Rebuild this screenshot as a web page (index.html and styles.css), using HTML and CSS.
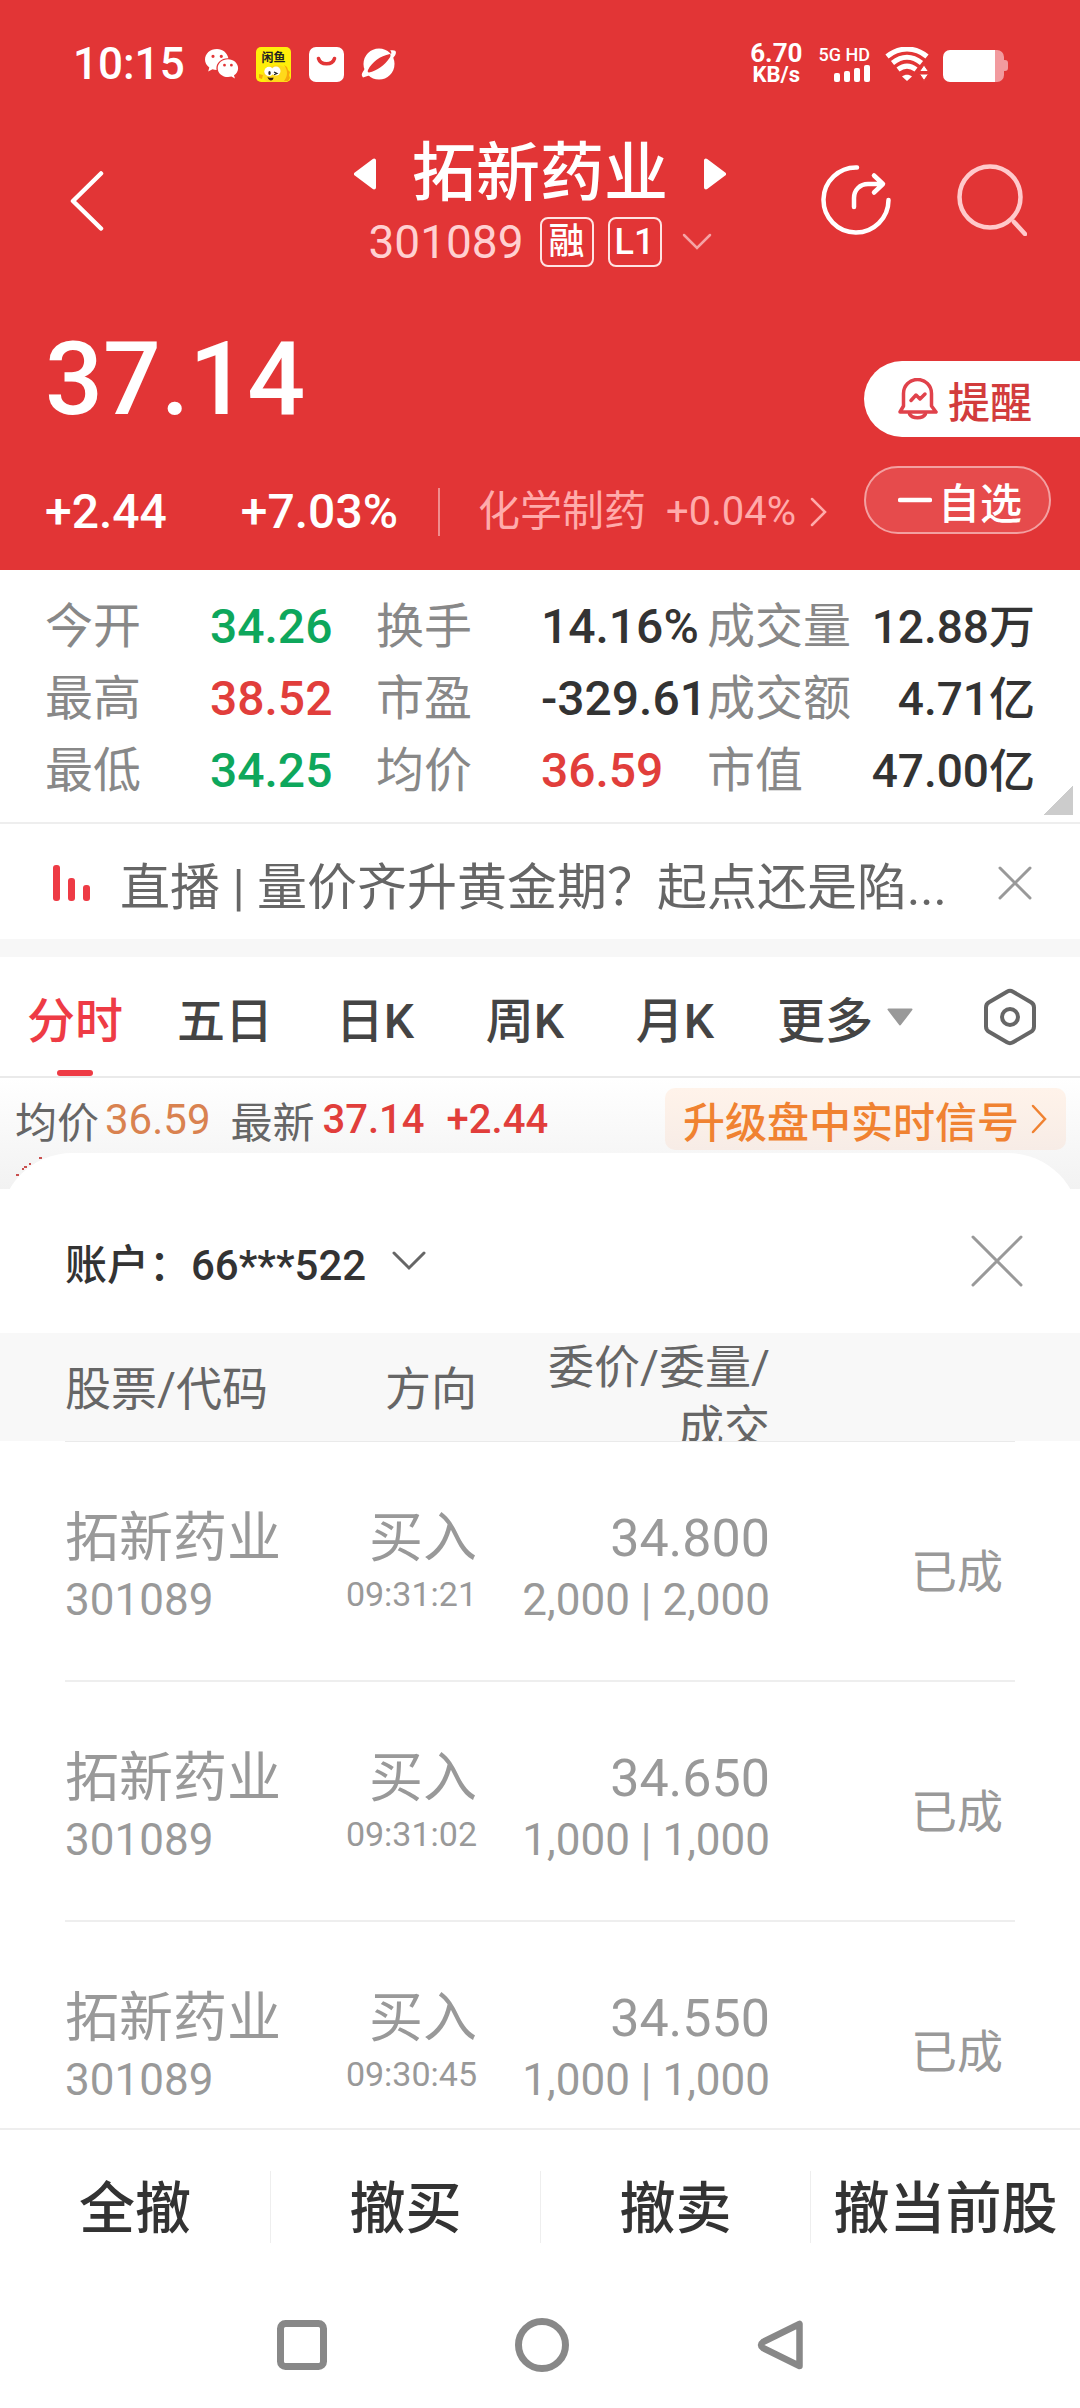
FILE: index.html
```html
<!DOCTYPE html>
<html lang="zh-CN">
<head>
<meta charset="utf-8">
<meta name="viewport" content="width=device-width, initial-scale=1">
<title>拓新药业 301089</title>
<link rel="stylesheet" href="styles.css">
</head>
<body>
<div class="app">
  <header class="hero">
    <div class="status">
      <div class="status-left">
        <span class="clock">10:15</span>
        <svg class="ic-wechat" width="34" height="30" viewBox="0 0 34 30"><path fill="#fff" fill-rule="evenodd" d="M12 0C5 0 0 4.800 0 10.500c0 3.300 1.600 6 4.300 8L3.200 22.500l4.300-2.200c1.300.400 2.600.600 4.100.600-.100-.500-.200-1.100-.200-1.600 0-5.600 5-10 11.200-10h.800C22.300 3.900 17.600 0 12 0zM8 5.700a1.600 1.600 0 1 1 0 3.200 1.600 1.600 0 0 1 0-3.200zm8.300 0a1.600 1.600 0 1 1 0 3.200 1.600 1.600 0 0 1 0-3.200z"/><path fill="#fff" fill-rule="evenodd" d="M23 10.300c-5.800 0-10.300 4-10.300 8.900s4.500 8.900 10.300 8.900c1.200 0 2.400-.200 3.500-.500l3.400 1.900-.900-3.200c2.600-1.700 4.100-4.200 4.100-7.100 0-4.900-4.500-8.900-10.100-8.900zm-3.500 4.500a1.400 1.400 0 1 1 0 2.800 1.400 1.400 0 0 1 0-2.800zm6.900 0a1.400 1.400 0 1 1 0 2.800 1.400 1.400 0 0 1 0-2.800z"/></svg>
        <svg class="ic-fish" width="35" height="35" viewBox="0 0 35 35"><rect width="35" height="35" rx="5" fill="#ffee0a"/><path d="M11 35C5 30 6 22 14 19.500c6-2 14-2 18 4 3 5 1 9-1 11.500z" fill="#ffd91a"/><path d="M28 18l3 2 1 3 2 2-1 3 1 3-2 3h-4c4-5 4-11 0-16zM3 27l4 1-1 4-3-1z" fill="#f7a80a"/><circle cx="13" cy="24.500" r="4.700" fill="#fff"/><circle cx="20" cy="24" r="4.500" fill="#fff"/><ellipse cx="13.500" cy="26" rx="1.200" ry="1.900" fill="#222"/><path d="M18 25l3 1.500-3 1.200" fill="none" stroke="#222" stroke-width="1.200"/><path d="M11.500 30c2 1 4 1 6 .500 0 4-5 4-6-.500z" fill="#3a1d0c"/><text class="fish-name" x="17.500" y="15">闲鱼</text></svg>
        <svg class="ic-bag" width="35" height="35" viewBox="0 0 35 35"><rect width="35" height="35" rx="7" fill="#fff"/><path d="M9.500 11.500c2 7 14 7 16 0" fill="none" stroke="#e23536" stroke-width="3.600" stroke-linecap="round"/></svg>
        <svg class="ic-planet" width="35" height="32" viewBox="0 0 35 32"><circle cx="18" cy="16" r="15.500" fill="#fff"/><path d="M29 2.500c6-1 7 1 5 5l-4 5c-6 7-13 12-22 15l-6 2c-3-3 0-6 3-10-.500 3 0 5 2 5 9-2 19-9 23-18 .500-2 .500-3-1-4z" fill="#fff"/><path d="M7 22C11 14 19 8 29 6c1 1 .500 2.500-.500 4C24 17 16 23 8 24.500c-1.500 0-1.500-1-1-2.500z" fill="#e23536"/></svg>
      </div>
      <div class="status-right">
        <div class="speed"><span class="speed-num">6.70</span><span class="speed-unit">KB/s</span></div>
        <div class="signal"><span>5G HD</span>
          <svg width="36" height="17" viewBox="0 0 36 17" fill="#fff"><rect y="8" width="6" height="9" rx="2"/><rect x="10" y="6" width="6" height="11" rx="2"/><rect x="20" y="3" width="6" height="14" rx="2"/><rect x="30" width="6" height="17" rx="2"/></svg>
        </div>
        <svg class="ic-wifi" width="44" height="34" viewBox="0 0 44 34"><g fill="none" stroke="#fff" stroke-width="5"><path d="M2 9.500C14-.500 30-.500 42 9.500"/><path d="M7.500 16C17 8.500 27 8.500 36.500 16"/><path d="M13 22.500c6-4.500 12-4.500 18 0"/></g><path d="M17 29.500c3-2.500 7-2.500 10 0L22 34z" fill="#fff"/><path d="M34.500 24.500L39 18l4.500 6.500zM34.500 27h9L39 33.500z" fill="#fff" stroke="#e23536" stroke-width="1"/></svg>
        <svg class="ic-batt" width="65" height="32" viewBox="0 0 65 32"><path d="M51 0h3a7 7 0 0 1 7 7v3h1a3 3 0 0 1 3 3v5a3 3 0 0 1-3 3h-1v4a7 7 0 0 1-7 7h-3z" fill="#f29a9e"/><path d="M7 0h45v32H7a7 7 0 0 1-7-7V7a7 7 0 0 1 7-7z" fill="#fff"/></svg>
      </div>
    </div>

    <div class="titlebar">
      <button class="icon-btn back" type="button" aria-label="返回"><svg width="34" height="60" viewBox="0 0 34 60"><path d="M31 2.500L3 30l28 27.500" fill="none" stroke="#fff" stroke-width="4.500" stroke-linecap="round" stroke-linejoin="round"/></svg></button>
      <div class="title">
        <div class="title-main">
          <button class="icon-btn" type="button" aria-label="上一只"><svg width="22" height="32" viewBox="0 0 22 32"><path d="M20 2.500v27L2 16z" fill="#fff" stroke="#fff" stroke-width="4" stroke-linejoin="round"/></svg></button>
          <h1>拓新药业</h1>
          <button class="icon-btn" type="button" aria-label="下一只"><svg width="22" height="32" viewBox="0 0 22 32"><path d="M2 2.500v27L20 16z" fill="#fff" stroke="#fff" stroke-width="4" stroke-linejoin="round"/></svg></button>
        </div>
        <div class="title-sub">
          <span class="code">301089</span>
          <span class="tag">融</span><span class="tag">L1</span>
          <svg class="sub-arrow" width="30" height="18" viewBox="0 0 30 18"><path d="M2 2l13 13L28 2" fill="none" stroke="#f5a3a5" stroke-width="2.500" stroke-linecap="round"/></svg>
        </div>
      </div>
      <div class="title-actions">
        <button class="icon-btn" type="button" aria-label="分享"><svg width="70" height="72" viewBox="0 0 70 72"><g fill="none" stroke="#fff" stroke-width="4.500" stroke-linecap="round" stroke-linejoin="round"><path d="M36 3.500A32.500 32.500 0 1 0 67.500 36"/><path d="M33 43V34c0-8 6-14 14-14h14M53 11.500L62 20l-9 8.500"/></g></svg></button>
        <button class="icon-btn" type="button" aria-label="搜索"><svg width="70" height="72" viewBox="0 0 70 72"><g fill="none" stroke="#ffc9cb" stroke-width="4.500" stroke-linecap="round"><ellipse cx="33" cy="33" rx="30.500" ry="30.500"/><path d="M57 58l11 12"/></g></svg></button>
      </div>
    </div>

    <div class="quote">
      <div class="quote-main">
        <div class="price">37.14</div>
        <div class="change">
          <span>+2.44</span>
          <span class="pct">+7.03%</span>
          <a class="sector" href="#">
            <span>化学制药</span><span class="sector-pct">+0.04%</span>
            <svg width="17" height="30" viewBox="0 0 17 30"><path d="M2 2l13 13L2 28" fill="none" stroke="#ffabab" stroke-width="2.500" stroke-linecap="round"/></svg>
          </a>
        </div>
      </div>
      <div class="quote-actions">
        <button class="remind" type="button"><svg width="40" height="42" viewBox="0 0 40 42"><g fill="none" stroke="#e0424b" stroke-width="3.500" stroke-linejoin="round" stroke-linecap="round"><path d="M5.500 28V15.500a14 14 0 0 1 28 0V28l4.500 6H2z"/><path d="M11.500 36c3 5 13 5 16 0"/><path d="M13 22.500l5-5.500 4 4 5-5"/></g></svg>提醒</button>
        <button class="watch" type="button"><svg width="34" height="6" viewBox="0 0 34 6"><path d="M2 3h30" stroke="#fff" stroke-width="4.500" stroke-linecap="round"/></svg>自选</button>
      </div>
    </div>
  </header>

  <dl class="stats">
    <dt>今开</dt><dd class="down">34.26</dd><dt>换手</dt><dd>14.16%</dd><dt>成交量</dt><dd class="end">12.88万</dd>
    <dt>最高</dt><dd class="up">38.52</dd><dt>市盈</dt><dd>-329.61</dd><dt>成交额</dt><dd class="end">4.71亿</dd>
    <dt>最低</dt><dd class="down">34.25</dd><dt>均价</dt><dd class="up">36.59</dd><dt>市值</dt><dd class="end">47.00亿</dd>
  </dl>

  <div class="news">
    <svg width="38" height="36" viewBox="0 0 38 36" fill="#ee3b45"><rect width="7" height="36" rx="3"/><rect x="15" y="13" width="7" height="23" rx="3"/><rect x="30" y="20" width="7" height="16" rx="3"/></svg>
    <a href="#">直播 | 量价齐升黄金期？起点还是陷...</a>
    <button class="icon-btn" type="button" aria-label="关闭"><svg width="34" height="34" viewBox="0 0 34 34"><path d="M2 2l30 30M32 2L2 32" stroke="#999" stroke-width="3" stroke-linecap="round"/></svg></button>
  </div>

  <nav class="tabs">
    <button class="tab active" type="button">分时</button>
    <button class="tab" type="button">五日</button>
    <button class="tab" type="button">日K</button>
    <button class="tab" type="button">周K</button>
    <button class="tab" type="button">月K</button>
    <button class="tab more" type="button">更多<svg width="26" height="18" viewBox="0 0 26 18"><path d="M1.500 1.500h23L13 16.500z" fill="#999" stroke="#999" stroke-width="2" stroke-linejoin="round"/></svg></button>
    <button class="icon-btn" type="button" aria-label="设置"><svg width="52" height="58" viewBox="0 0 52 58"><g fill="none" stroke="#666" stroke-width="4"><path d="M23 3.700Q26 2 29 3.700l18 10.600Q50 16 50 19.500v19q0 3.500-3 5.200L29 54.300Q26 56 23 54.300L5 43.700q-3-1.700-3-5.200v-19Q2 16 5 14.300z"/><circle cx="26" cy="29" r="8"/></g></svg></button>
  </nav>

  <div class="chart">
    <div class="legend">
      <span>均价</span><span class="avg">36.59</span><span class="latest">最新</span><span class="up">37.14</span><span class="up diff">+2.44</span>
      <a class="signal-link" href="#">升级盘中实时信号<svg width="17" height="30" viewBox="0 0 17 30"><path d="M2 2l12 13L2 28" fill="none" stroke="#f08231" stroke-width="2.500" stroke-linecap="round"/></svg></a>
    </div>
    <svg class="line" width="40" height="26" viewBox="0 0 40 26"><path d="M1 20h3M7 14h2M9 12h3M14 9h2M24 3h3" stroke="#c9504f" stroke-width="2"/></svg>
  </div>

  <main class="sheet">
    <div class="account">
      <button class="account-pick" type="button">账户：66***522<svg width="34" height="20" viewBox="0 0 34 20"><path d="M2 2l15 15L32 2" fill="none" stroke="#666" stroke-width="3" stroke-linecap="round"/></svg></button>
      <button class="icon-btn" type="button" aria-label="关闭"><svg width="52" height="52" viewBox="0 0 52 52"><path d="M2 2l48 48M50 2L2 50" stroke="#999" stroke-width="3" stroke-linecap="round"/></svg></button>
    </div>
    <table class="orders">
      <thead>
        <tr><th>股票/代码</th><th>方向</th><th class="tall">委价/委量/<br>成交</th><th></th></tr>
      </thead>
      <tbody>
        <tr>
          <td><span class="big">拓新药业</span><span class="small">301089</span></td>
          <td><span class="big">买入</span><span class="time">09:31:21</span></td>
          <td><span class="big num">34.800</span><span class="small">2,000 | 2,000</span></td>
          <td class="state">已成</td>
        </tr>
        <tr>
          <td><span class="big">拓新药业</span><span class="small">301089</span></td>
          <td><span class="big">买入</span><span class="time">09:31:02</span></td>
          <td><span class="big num">34.650</span><span class="small">1,000 | 1,000</span></td>
          <td class="state">已成</td>
        </tr>
        <tr>
          <td><span class="big">拓新药业</span><span class="small">301089</span></td>
          <td><span class="big">买入</span><span class="time">09:30:45</span></td>
          <td><span class="big num">34.550</span><span class="small">1,000 | 1,000</span></td>
          <td class="state">已成</td>
        </tr>
      </tbody>
    </table>
  </main>

  <div class="actions">
    <button type="button">全撤</button>
    <button type="button">撤买</button>
    <button type="button">撤卖</button>
    <button type="button">撤当前股</button>
  </div>

  <nav class="sysnav">
    <button class="icon-btn" type="button" aria-label="最近任务"><svg width="52" height="52" viewBox="0 0 52 52"><rect x="4.500" y="4.500" width="43" height="43" rx="5" fill="none" stroke="#888" stroke-width="7"/></svg></button>
    <button class="icon-btn" type="button" aria-label="主页"><svg width="54" height="54" viewBox="0 0 54 54"><circle cx="27" cy="27" r="23.500" fill="none" stroke="#888" stroke-width="7"/></svg></button>
    <button class="icon-btn" type="button" aria-label="返回"><svg width="48" height="52" viewBox="0 0 48 52"><path d="M43.500 5v42L7 29Q3 26 7 23z" fill="none" stroke="#888" stroke-width="6.500" stroke-linejoin="round"/></svg></button>
  </nav>
</div>
</body>
</html>
```
FILE: styles.css
```css
:root {
  --red: #e23536;
  --up: #e13e3b;
  --down: #0ea75c;
}

* { box-sizing: border-box; }

body {
  margin: 0;
  background: #fff;
  color: #333;
  font-family: Roboto, "Noto Sans CJK SC", sans-serif;
}

button {
  margin: 0;
  padding: 0;
  border: 0;
  background: none;
  color: inherit;
  font: inherit;
  white-space: nowrap;
}

a { color: inherit; text-decoration: none; }
svg { display: block; flex: none; }
h1, dl, dd { margin: 0; }

.app {
  display: flex;
  flex-direction: column;
  height: 100vh;
}

.hero, .stats, .news, .tabs, .chart, .account, .actions, .sysnav { flex: none; }

/* Red header */
.hero { background: var(--red); color: #fff; }

.status {
  display: flex;
  justify-content: space-between;
  height: 128px;
  padding: 0 72px 0 73px;
}

.status-left, .status-right { display: flex; align-items: center; }
.clock { font-size: 44px; font-weight: 500; margin-right: 20px; }
.ic-wechat { margin-right: 17px; }
.ic-fish { margin-right: 18px; }
.ic-bag { margin-right: 17px; }
.fish-name { font-size: 12px; font-weight: 700; text-anchor: middle; fill: #222; }

.speed {
  display: flex;
  flex-direction: column;
  align-items: center;
  font-weight: 700;
  line-height: 22px;
  margin-right: 16px;
}
.speed-num { font-size: 26px; }
.speed-unit { font-size: 22px; }

.signal {
  display: flex;
  flex-direction: column;
  align-items: flex-end;
  gap: 2px;
  margin-right: 15px;
  font-size: 18px;
  font-weight: 500;
  line-height: 16px;
}
.ic-wifi { margin-right: 14px; }
.ic-batt { margin-top: 4px; }

.icon-btn { display: flex; align-items: center; justify-content: center; }

.titlebar {
  display: grid;
  grid-template-columns: 1fr auto 1fr;
  align-items: center;
  padding: 10px 53px 0;
}
.back { justify-self: start; padding: 0 0 10px 17px; }
.title-main {
  display: flex;
  align-items: center;
  justify-content: center;
  gap: 36px;
  height: 72px;
}
.title-main h1 { font-size: 64px; font-weight: 500; line-height: 72px; }
.title-sub {
  display: flex;
  align-items: center;
  justify-content: center;
  height: 64px;
}
.code { font-size: 46px; color: #ffd0d1; margin-right: 16px; }
.tag {
  width: 54px;
  height: 50px;
  margin-right: 14px;
  border: 2px solid #ffe3e3;
  border-radius: 8px;
  font-size: 36px;
  font-weight: 500;
  line-height: 46px;
  text-align: center;
}
.sub-arrow { margin-left: 6px; }
.title-actions {
  display: flex;
  justify-content: flex-end;
  gap: 66px;
  padding-bottom: 12px;
}

.quote { display: flex; justify-content: space-between; }
.quote-main { padding: 45px 0 28px 45px; }
.price { font-size: 102px; font-weight: 500; line-height: 120px; }
.change {
  display: flex;
  align-items: center;
  margin-top: 43px;
  font-size: 48px;
  font-weight: 500;
  line-height: 60px;
  white-space: nowrap;
}
.pct { margin-left: 74px; }
.sector {
  display: flex;
  align-items: center;
  height: 48px;
  margin-left: 40px;
  padding-left: 38px;
  border-left: 2px solid #f08d8e;
  color: #ffabab;
  font-size: 42px;
  font-weight: 400;
}
.sector-pct { font-size: 40px; margin: 0 14px 0 20px; }

.quote-actions {
  display: flex;
  flex-direction: column;
  gap: 29px;
  width: 216px;
  padding-top: 87px;
}
.remind, .watch { display: flex; align-items: center; font-size: 42px; font-weight: 500; }
.remind {
  height: 76px;
  padding-left: 34px;
  gap: 10px;
  border-radius: 38px 0 0 38px;
  background: #fff;
  color: #d23c3c;
}
.watch {
  width: 187px;
  height: 68px;
  padding-left: 32px;
  gap: 6px;
  border: 2px solid #f3a0a1;
  border-radius: 34px;
  background: #e64b4c;
}

/* Key figures */
.stats {
  position: relative;
  display: grid;
  grid-template-columns: 165fr 166fr 165fr 166fr 144fr 184fr;
  padding: 21px 45px 15px;
  border-bottom: 2px solid #eee;
  line-height: 72px;
  white-space: nowrap;
}
.stats::after {
  content: "";
  position: absolute;
  right: 7px;
  bottom: 7px;
  width: 29px;
  height: 29px;
  background: linear-gradient(135deg, transparent 50%, #ccc 50%);
}
.stats dt { color: #888; font-size: 48px; }
.stats dd { font-size: 48px; font-weight: 500; }
.stats dd.end { font-size: 46px; text-align: right; }
.stats dd.up, .up { color: var(--up); }
.stats dd.down { color: var(--down); }

.news {
  display: flex;
  align-items: center;
  height: 133px;
  padding: 2px 48px 0 53px;
  border-bottom: 18px solid #f7f7f7;
  color: #666;
  font-size: 50px;
  white-space: nowrap;
}
.news a { flex: 1; margin-left: 29px; }

/* Period tabs */
.tabs {
  display: grid;
  grid-template-columns: repeat(5, 150fr) 190fr 140fr;
  height: 121px;
  border-bottom: 2px solid #eaeaea;
  color: #444;
  font-size: 48px;
  font-weight: 500;
}
.tab { position: relative; }
.tab.active { color: #ee3b45; }
.tab.active::after {
  content: "";
  position: absolute;
  bottom: 0;
  left: 50%;
  width: 36px;
  height: 6px;
  margin-left: -18px;
  border-radius: 3px;
  background: #ee3b45;
}
.tab.more { display: flex; align-items: center; justify-content: center; gap: 14px; }

.chart {
  position: relative;
  height: 111px;
  padding: 10px 14px 0 15px;
  background: linear-gradient(#fff, #f2f2f2);
}
.legend {
  display: flex;
  align-items: center;
  color: #666;
  font-size: 42px;
  white-space: nowrap;
}
.avg { margin-left: 6px; color: #d98250; }
.latest { margin: 0 8px 0 20px; }
.legend .up { font-size: 40px; font-weight: 500; }
.diff { margin-left: 22px; }
.signal-link {
  display: flex;
  align-items: center;
  gap: 12px;
  height: 62px;
  margin-left: auto;
  padding: 0 18px;
  border-radius: 10px;
  background: linear-gradient(#fff3ea, #f7ece6);
  color: #f08231;
  font-weight: 500;
}
.line { position: absolute; left: 15px; bottom: 8px; }

/* Order sheet, sliding over the chart */
.sheet {
  position: relative;
  display: flex;
  flex: 1;
  flex-direction: column;
  min-height: 0;
  margin-top: -36px;
}
.account {
  display: flex;
  align-items: center;
  justify-content: space-between;
  height: 180px;
  padding: 36px 57px 0 65px;
  border-radius: 72px 72px 0 0;
  background: #fff;
}
.account-pick {
  display: flex;
  align-items: center;
  gap: 26px;
  font-size: 42px;
  font-weight: 500;
}

.orders {
  display: block;
  flex: 1;
  min-height: 0;
  overflow-y: auto;
  scrollbar-width: none;
  color: #999;
}
.orders thead, .orders tbody { display: block; padding: 0 65px; }
.orders thead { background: #f8f8f8; color: #666; }
.orders tr {
  display: grid;
  grid-template-columns: 250fr 162fr 293fr 245fr;
}
.orders th {
  height: 108px;
  padding: 0;
  overflow: hidden;
  font-size: 46px;
  font-weight: 400;
  line-height: 112px;
  text-align: right;
  white-space: nowrap;
}
.orders th:first-child, .orders td:first-child { text-align: left; }
.orders th.tall { padding-top: 4px; line-height: 60px; }
.orders tbody tr { height: 240px; border-bottom: 2px solid #eee; }
.orders tbody tr:first-child { height: 241px; border-top: 1px solid #eaeaea; }
.orders td {
  padding: 64px 0 0;
  text-align: right;
  white-space: nowrap;
}
.orders td span { display: block; }
.big { font-size: 54px; line-height: 66px; }
.big.num { font-size: 52px; }
.small { font-size: 44px; line-height: 56px; }
.time { font-size: 34px; line-height: 44px; }
.orders td.state {
  align-self: center;
  padding: 14px 12px 0 0;
  font-size: 46px;
}

.actions {
  display: grid;
  grid-template-columns: repeat(4, 1fr);
  padding: 41px 0 45px;
  border-top: 2px solid #eee;
  font-size: 56px;
  font-weight: 500;
}
.actions button { height: 72px; padding-top: 4px; line-height: 68px; }
.actions button + button { border-left: 1px solid #eee; }

.sysnav {
  display: flex;
  justify-content: center;
  gap: 187px;
  padding: 30px 0 36px;
}
.sysnav .icon-btn { height: 54px; }
```
